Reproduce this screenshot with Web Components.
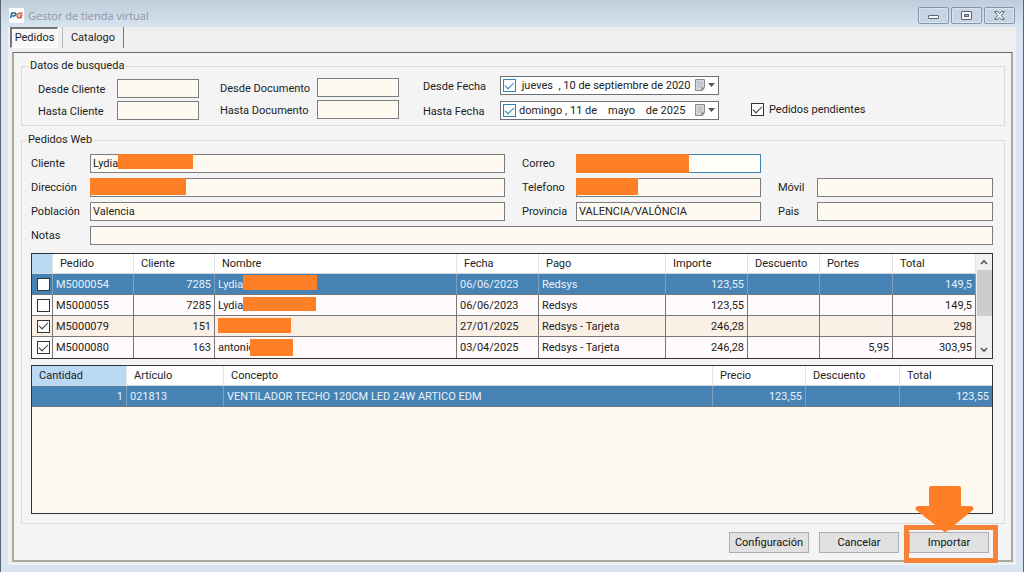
<!DOCTYPE html>
<html lang="es">
<head>
<meta charset="utf-8">
<title>Gestor de tienda virtual</title>
<style>
  body { margin: 0; font: 11px/14px Roboto, "Liberation Sans", Arial, sans-serif; color: #222; --field: #fffaf0; --mark: #ff7f27; }
</style>
</head>
<body>
<shop-window></shop-window>
<script>
const define = (name, html, init) => {
  const t = document.createElement('template');
  t.innerHTML = html;
  customElements.define(name, class extends HTMLElement {
    connectedCallback() {
      if (this.shadowRoot) return;
      this.attachShadow({ mode: 'open' }).append(t.content.cloneNode(true));
      if (init) init(this, this.shadowRoot);
    }
  });
};

const calendarIcon = `<svg width="22" height="14" viewBox="0 0 22 14" aria-hidden="true"><path d="M1.5 1.5h9v8l-2 3h-7z" fill="#d4d6da" stroke="#8a8c92"/><path d="M3 4.500h6M3 6.500h6M3 8.500h6M4.500 3v7M6.500 3v7" stroke="#b5b8be" stroke-width=".6"/><path d="M10.500 9.500l-3 3v-3z" fill="#777"/><path d="M14 5h7l-3.500 4z" fill="#555"/></svg>`;

/* Solid block that hides personal data */
define('redaction-mark', `<style>
  :host { position: absolute; background: var(--mark); }
</style>`, el => {
  const [x, y, w, h] = el.getAttribute('area').split(' ');
  el.style.cssText = `left:${x}px;top:${y}px;width:${w}px;height:${h}px`;
});

define('text-field', `<style>
  :host { display: flex; align-items: center; min-width: 0; }
  label { flex: none; width: var(--label, 59px); padding-top: var(--label-top, 0); }
  .box { position: relative; flex: 1; min-width: 0; height: 19px; }
  input { box-sizing: border-box; width: 100%; height: 100%; display: block; border: 1px solid #7b7d80; background: var(--field); padding: 0 2px 1px; font: inherit; color: inherit; border-radius: 0; outline: none; }
  :host([active]) input { border-color: #3b85b0; background: #fffdf9; }
</style>
<label for="f"></label><div class="box"><input id="f" type="text"><slot></slot></div>`, (el, r) => {
  r.querySelector('label').textContent = el.getAttribute('label');
  r.querySelector('input').value = el.getAttribute('value') || '';
});

define('check-box', `<style>
  :host { display: inline-flex; }
  label { display: flex; align-items: center; gap: 5px; }
  input { appearance: none; box-sizing: border-box; margin: 0; width: 13px; height: 13px; border: 1px solid var(--tick, #333); background: #fff; display: grid; place-items: center; }
  input:checked::before { content: ""; box-sizing: border-box; width: 9px; height: 5px; border: solid var(--tick, #333); border-width: 0 0 1px 1px; transform: rotate(-45deg); margin-bottom: 3px; }
</style>
<label><input type="checkbox"><slot></slot></label>`, (el, r) => {
  const i = r.querySelector('input');
  i.checked = el.hasAttribute('checked');
  if (el.hasAttribute('name')) i.setAttribute('aria-label', el.getAttribute('name'));
});

define('date-field', `<style>
  :host { display: flex; align-items: center; }
  label { flex: none; width: 77px; padding-top: var(--label-top, 0); }
  .box { box-sizing: border-box; width: 219px; height: 19px; display: flex; align-items: center; border: 1px solid #6d6f72; background: #fff; padding-left: 2px; }
  check-box { --tick: #2f86b8; }
  input { flex: 1; min-width: 0; border: 0; background: none; padding: 0 0 0 3px; font: inherit; color: inherit; outline: none; }
  button { border: 0; background: none; padding: 0; width: 24px; height: 15px; display: flex; }
</style>
<label for="d"></label><div class="box"><check-box checked name="Activar fecha"></check-box><input id="d" type="text"><button aria-label="Abrir calendario">${calendarIcon}</button></div>`, (el, r) => {
  r.querySelector('label').textContent = el.getAttribute('label');
  r.querySelector('input').value = el.getAttribute('value');
});

define('group-box', `<style>
  :host { display: flex; }
  .frame { flex: 1; display: flex; flex-direction: column; min-width: 0; margin-top: 7px; padding: var(--pad); padding-top: 0; border: 1px solid #dcdcdc; }
  .caption { align-self: flex-start; margin: -8px 0 var(--drop) var(--caption); padding: 0 2px; height: 14px; background: #f4f4f4; }
</style>
<div class="frame" role="group" aria-labelledby="c"><span class="caption" id="c"></span><slot></slot></div>`, (el, r) => {
  r.querySelector('.caption').textContent = el.getAttribute('caption');
});

define('push-button', `<style>
  :host { display: block; position: relative; width: 80px; height: 21px; }
  button { box-sizing: border-box; width: 100%; height: 100%; display: block; border: 1px solid #adadad; border-radius: 0; background: #e1e1e1; padding: 1px 0 0; font: inherit; color: #111; }
</style>
<button type="button"><slot></slot></button><slot name="note"></slot>`);

/* Frame and arrow that point out the button beneath */
define('callout-frame', `<style>
  :host { position: absolute; inset: -7px -9px -10px -5px; border: 5px solid #f58237; pointer-events: none; }
  svg { position: absolute; left: 5px; top: -45px; }
</style>
<svg width="62" height="48" viewBox="0 0 62 48" aria-hidden="true"><path d="M17 1h28q2 0 2 2v18h10q4 1 2 4L33 46q-2 2-4 0L2 25q-2-3 2-4h11V3q0-2 2-2z" fill="#ff7f27"/></svg>`);

const tableCss = `
  :host { display: flex; box-sizing: border-box; border: 1px solid #333; background: var(--field); }
  table { border-collapse: separate; border-spacing: 0; table-layout: fixed; width: 100%; }
  th, td { box-sizing: border-box; padding: 1px 3px 0; text-align: left; font-weight: 400; white-space: nowrap; position: relative; }
  th { height: 20px; padding-left: 7px; background: #fff; border-right: 1px solid #e3e3e3; border-bottom: 1px solid #d0d6dc; }
  th:first-child { background: #b9daf2; }
  td { height: 21px; border-right: 1px solid #777; border-bottom: 1px solid #777; background: #fffafb; }
  tr.alt td { background: #faf0e6; }
  tr.sel td { background: #4682b4; color: #e8f2fa; border-right-color: #7fa0ba; }
  .n { text-align: right; }
`;

define('order-grid', `<style>${tableCss}
  tr:last-child td { border-bottom: 0; }
  td:first-child { padding: 0 0 0 5px; }
  td check-box { vertical-align: middle; }
  .bar { flex: none; width: 16px; background: #f0f0f0; display: flex; flex-direction: column; align-items: center; }
  .bar button { width: 16px; height: 16px; border: 0; padding: 0; background: none; display: grid; place-items: center; }
  .thumb { width: 15px; height: 46px; background: #cdcdcd; margin-bottom: auto; }
</style>
<table>
  <colgroup><col style="width:21px"><col style="width:81px"><col style="width:81px"><col><col style="width:82px"><col style="width:127px"><col style="width:82px"><col style="width:72px"><col style="width:73px"><col style="width:83px"></colgroup>
  <thead><tr><th></th><th>Pedido</th><th>Cliente</th><th>Nombre</th><th>Fecha</th><th>Pago</th><th>Importe</th><th>Descuento</th><th>Portes</th><th>Total</th></tr></thead>
  <tbody>
    <tr class="sel"><td><check-box name="M5000054"></check-box></td><td>M5000054</td><td class="n">7285</td><td>Lydia<redaction-mark area="28 1 74 15"></redaction-mark></td><td>06/06/2023</td><td>Redsys</td><td class="n">123,55</td><td></td><td></td><td class="n">149,5</td></tr>
    <tr><td><check-box name="M5000055"></check-box></td><td>M5000055</td><td class="n">7285</td><td>Lydia<redaction-mark area="28 2 73 14"></redaction-mark></td><td>06/06/2023</td><td>Redsys</td><td class="n">123,55</td><td></td><td></td><td class="n">149,5</td></tr>
    <tr class="alt"><td><check-box checked name="M5000079"></check-box></td><td>M5000079</td><td class="n">151</td><td><redaction-mark area="3 2 73 15"></redaction-mark></td><td>27/01/2025</td><td>Redsys - Tarjeta</td><td class="n">246,28</td><td></td><td></td><td class="n">298</td></tr>
    <tr><td><check-box checked name="M5000080"></check-box></td><td>M5000080</td><td class="n">163</td><td>antonio<redaction-mark area="35 2 43 17"></redaction-mark></td><td>03/04/2025</td><td>Redsys - Tarjeta</td><td class="n">246,28</td><td></td><td class="n">5,95</td><td class="n">303,95</td></tr>
  </tbody>
</table>
<div class="bar"><button aria-label="Subir"><svg width="8" height="6" viewBox="0 0 8 6"><path d="M1 5l3-3 3 3" fill="none" stroke="#555" stroke-width="1.600"/></svg></button><div class="thumb"></div><button aria-label="Bajar"><svg width="8" height="6" viewBox="0 0 8 6"><path d="M1 1l3 3 3-3" fill="none" stroke="#555" stroke-width="1.600"/></svg></button></div>`);

define('line-grid', `<style>${tableCss}
  :host { align-items: flex-start; }
  tr > :last-child { border-right: 0; }
</style>
<table>
  <colgroup><col style="width:95px"><col style="width:97px"><col><col style="width:93px"><col style="width:94px"><col style="width:92px"></colgroup>
  <thead><tr><th>Cantidad</th><th>Artículo</th><th>Concepto</th><th>Precio</th><th>Descuento</th><th>Total</th></tr></thead>
  <tbody><tr class="sel"><td class="n">1</td><td>021813</td><td>VENTILADOR TECHO 120CM LED 24W ARTICO EDM</td><td class="n">123,55</td><td></td><td class="n">123,55</td></tr></tbody>
</table>`);

define('title-bar', `<style>
  :host { display: flex; align-items: center; height: 27px; padding: 0 8px 0 8px; background: linear-gradient(#bfcddb, #d6e3f1); color: #8d959e; }
  .logo { flex: none; margin-right: 4px; margin-top: 3px; }
  h1 { flex: 1; margin: 4px 0 0; font: 11px/15px "Open Sans", "Noto Sans", sans-serif; }
  .controls { display: flex; gap: 2px; margin-top: 4px; }
  button { box-sizing: border-box; width: 31px; height: 17px; border: 1px solid #8595aa; border-radius: 2px; background: #c6d4e3; box-shadow: inset 0 0 0 1px #d8e4f0; padding: 0; display: grid; place-items: center; }
</style>
<svg class="logo" width="15" height="15" viewBox="0 0 15 15" aria-hidden="true"><rect width="15" height="15" fill="#fff"/><path d="M1.500 10l1.300-5h3q1.500.2 1 1.700-.4 1.300-2 1.300H3" fill="none" stroke="#25689a" stroke-width="1.500"/><path d="M13.500 5.300H10q-1.500.2-1.800 2.300-.2 1.900 1.300 2h2.500l.6-2.200h-2.200" fill="none" stroke="#d2613c" stroke-width="1.600"/></svg>
<h1>Gestor de tienda virtual</h1>
<div class="controls">
  <button aria-label="Minimizar"><svg width="11" height="9" viewBox="0 0 11 9"><rect x=".5" y="4.500" width="10" height="3" rx=".5" fill="#f7f9fb" stroke="#5a6270"/></svg></button>
  <button aria-label="Maximizar"><svg width="11" height="9" viewBox="0 0 11 9"><rect x=".5" y=".5" width="10" height="8" rx=".5" fill="#f7f9fb" stroke="#5a6270"/><rect x="3.500" y="3.500" width="4" height="2" fill="#a9b5c4" stroke="#5a6270"/></svg></button>
  <button aria-label="Cerrar"><svg width="11" height="9" viewBox="0 0 11 9"><path d="M.7.600h3l1.800 2 1.800-2h3L7.300 4.500l3 3.900h-3l-1.800-2-1.800 2h-3l3-3.900z" fill="#f7f9fb" stroke="#5a6270"/></svg></button>
</div>`);

define('tab-strip', `<style>
  :host { display: block; padding-left: 2px; }
  [role=tablist] { display: flex; height: 21px; }
  button { box-sizing: border-box; border: 0; background: none; padding: 0; font: inherit; color: inherit; }
  .on { width: 48px; background: #f8f8f8; border: solid; border-width: 2px 1px 1px 2px; border-color: #777 #fff #fff #777; }
  .off { width: 62px; margin-left: 4px; border-left: 1px solid #bbb; border-right: 1px solid #777; }
</style>
<div role="tablist"><button class="on" role="tab" aria-selected="true">Pedidos</button><button class="off" role="tab" aria-selected="false">Catalogo</button></div>`);

define('shop-window', `<style>
  :host { box-sizing: border-box; display: flex; flex-direction: column; min-height: 100vh; background: #d8e4f1; border: solid #5c636e; border-width: 0 1px; }
  main { flex: 1; display: flex; flex-direction: column; margin: 0 7px 7px; background: #efefef; }
  .panel { flex: 1; display: flex; flex-direction: column; margin: 4px 3px 3px 4px; padding: 6px 6px 7px 7px; background: #f4f4f4; border: solid #aaa9a3; border-width: 1px 2px 2px; border-top-color: #696969; }
  .search { --pad: 0 8px 5px 16px; --drop: 3px; --caption: -10px; --label-top: 3px; }
  .search .row { display: flex; align-items: center; }
  .pair { display: grid; gap: 3px; }
  .client { --label: 79px; width: 161px; margin-right: 21px; padding-top: 2px; }
  .doc { --label: 97px; width: 179px; margin-right: 24px; }
  .date { gap: 6px; margin-right: 32px; }
  .pending { align-self: flex-end; height: 21px; }
  .orders { flex: 1; margin-top: 7px; --pad: 0 11px 9px 9px; --drop: 7px; --caption: -5px; }
  .form { display: grid; grid-template-columns: 1fr 239px 215px; gap: 5px 17px; margin-bottom: 8px; }
  .first { grid-column: 1; }
  .mid { --label: 54px; }
  .end { --label: 39px; grid-column: 3; }
  .all { grid-column: 1 / -1; }
  line-grid { flex: 1; margin-top: 6px; }
  footer { display: flex; justify-content: flex-end; gap: 10px; margin-top: 8px; padding-right: 16px; }
</style>
<title-bar></title-bar>
<main>
  <tab-strip></tab-strip>
  <div class="panel">
    <group-box class="search" caption="Datos de busqueda">
      <div class="row">
        <div class="pair client"><text-field label="Desde Cliente"></text-field><text-field label="Hasta Cliente"></text-field></div>
        <div class="pair doc"><text-field label="Desde Documento"></text-field><text-field label="Hasta Documento"></text-field></div>
        <div class="pair date"><date-field label="Desde Fecha" value=" jueves  , 10 de septiembre de 2020"></date-field><date-field label="Hasta Fecha" value="domingo , 11 de    mayo    de 2025"></date-field></div>
        <check-box class="pending" checked>Pedidos pendientes</check-box>
      </div>
    </group-box>
    <group-box class="orders" caption="Pedidos Web">
      <div class="form">
        <text-field label="Cliente" value="Lydia"><redaction-mark area="28 0 75 15"></redaction-mark></text-field>
        <text-field class="mid" label="Correo" active><redaction-mark area="0 0 113 19"></redaction-mark></text-field>
        <text-field class="first" label="Dirección"><redaction-mark area="0 0 96 17"></redaction-mark></text-field>
        <text-field class="mid" label="Telefono"><redaction-mark area="0 0 62 17"></redaction-mark></text-field>
        <text-field class="end" label="Móvil"></text-field>
        <text-field label="Población" value="Valencia"></text-field>
        <text-field class="mid" label="Provincia" value="VALENCIA/VALÔNCIA"></text-field>
        <text-field class="end" label="Pais"></text-field>
        <text-field class="all" label="Notas"></text-field>
      </div>
      <order-grid></order-grid>
      <line-grid></line-grid>
    </group-box>
    <footer>
      <push-button>Configuración</push-button>
      <push-button>Cancelar</push-button>
      <push-button>Importar<callout-frame slot="note"></callout-frame></push-button>
    </footer>
  </div>
</main>`);
</script>
</body>
</html>
